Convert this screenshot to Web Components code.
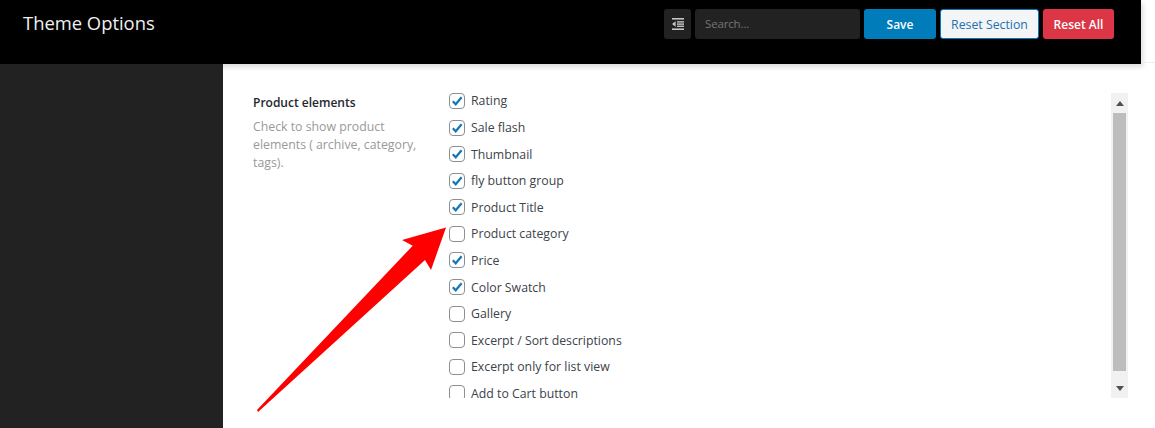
<!DOCTYPE html>
<html>
<head>
<meta charset="utf-8">
<title>Theme Options</title>
<style>
  html, body { margin: 0; height: 100%; overflow: hidden; background: #fff; }
  body { font-family: "Open Sans", "Noto Sans", sans-serif; }
</style>
</head>
<body>
<theme-options></theme-options>

<script>
class OptionsHeader extends HTMLElement {
	constructor() {
		super();
		this.attachShadow({ mode: 'open' });
	}

	connectedCallback() {
		this.shadowRoot.innerHTML = `
      <style>
        :host {
          display: flex;
          justify-content: space-between;
          box-sizing: border-box;
          width: 1141px;
          height: 64px;
          padding: 9px 27px 0 23px;
          background: #000;
          box-shadow: 2px 3px 5px rgba(0,0,0,0.14);
          position: relative;
          z-index: 1;
        }
        :host::after {
          content: '';
          position: absolute;
          left: 100%;
          top: 62px;
          width: 14px;
          height: 1px;
          background: #eee;
        }
        h1 {
          margin: 0;
          color: #f0f0f0;
          font: 400 18.4px/28px "Open Sans", sans-serif;
        }
        .tools {
          display: flex;
          gap: 4px;
          height: 30px;
        }
        .toggle {
          width: 27px;
          background: #222;
          border-radius: 3px;
          display: flex;
          align-items: center;
          justify-content: center;
        }
        .search {
          box-sizing: border-box;
          width: 165px;
          padding-left: 10px;
          background: #222;
          border-radius: 3px;
          color: #757575;
          font-size: 11.5px;
          letter-spacing: -0.15px;
          line-height: 30px;
        }
        button {
          box-sizing: border-box;
          height: 30px;
          padding: 0;
          border: 0;
          border-radius: 3px;
          font: 600 12px "Open Sans", sans-serif;
          color: #fff;
        }
        .save { width: 72px; background: #007cba; }
        .section {
          width: 99px;
          background: #f3f5f6;
          border: 1px solid #007cba;
          color: #2271b1;
          font-weight: 400;
          font-size: 12.3px;
        }
        .all { width: 71px; background: #dc3545; }
      </style>
      <h1>Theme Options</h1>
      <div class="tools">
        <div class="toggle">
          <svg width="12" height="12" viewBox="0 0 12 12" fill="#c4c4c4">
            <rect x="0" y="0" width="12" height="1.6"/>
            <rect x="5" y="3.2" width="7" height="1.4"/>
            <rect x="5" y="5.4" width="7" height="1.4"/>
            <rect x="5" y="7.6" width="7" height="1.4"/>
            <rect x="0" y="10.4" width="12" height="1.6"/>
            <path d="M3.6 3.2v5.6L0 6z"/>
          </svg>
        </div>
        <div class="search">Search...</div>
        <button class="save">Save</button>
        <button class="section">Reset Section</button>
        <button class="all">Reset All</button>
      </div>
    `;
	}
}

class OptionCheck extends HTMLElement {
	constructor() {
		super();
		this.attachShadow({ mode: 'open' });
	}

	connectedCallback() {
		const tick = this.hasAttribute('checked')
			? '<svg width="12" height="12" viewBox="0 0 12 12"><path d="M1.8 6.2 4.7 9.3 10.6 2.2" fill="none" stroke="#1379b4" stroke-width="2.2"/></svg>'
			: '';
		this.shadowRoot.innerHTML = `
      <style>
        :host {
          display: flex;
          align-items: center;
          gap: 6px;
          height: 26.6px;
          color: #3c434a;
          font-size: 12.3px;
          white-space: nowrap;
        }
        .box {
          box-sizing: border-box;
          width: 16px;
          height: 16px;
          flex: none;
          border: 1px solid #8c8f94;
          border-radius: 4px;
          background: #fff;
          display: flex;
          align-items: center;
          justify-content: center;
        }
      </style>
      <span class="box">${tick}</span>
      <slot></slot>
    `;
	}
}

class OptionScrollbar extends HTMLElement {
	constructor() {
		super();
		this.attachShadow({ mode: 'open' });
	}

	connectedCallback() {
		this.shadowRoot.innerHTML = `
      <style>
        :host {
          display: flex;
          flex-direction: column;
          align-items: center;
          width: 17px;
          height: 305px;
          background: #f1f1f1;
        }
        .arrow {
          height: 20px;
          flex: none;
          display: flex;
          align-items: center;
        }
        .track {
          flex: 1;
          padding: 0 2px;
          box-sizing: border-box;
          width: 100%;
        }
        .thumb {
          height: 258px;
          background: #bdbdbd;
        }
      </style>
      <div class="arrow"><svg width="8" height="5" viewBox="0 0 8 5"><path d="M4 0 8 5H0z" fill="#505050"/></svg></div>
      <div class="track"><div class="thumb"></div></div>
      <div class="arrow"><svg width="8" height="5" viewBox="0 0 8 5"><path d="M4 5 8 0H0z" fill="#505050"/></svg></div>
    `;
	}
}

class ProductElements extends HTMLElement {
	constructor() {
		super();
		this.attachShadow({ mode: 'open' });
	}

	connectedCallback() {
		const options = [
			['Rating', true],
			['Sale flash', true],
			['Thumbnail', true],
			['fly button group', true],
			['Product Title', true],
			['Product category', false],
			['Price', true],
			['Color Swatch', true],
			['Gallery', false],
			['Excerpt / Sort descriptions', false],
			['Excerpt only for list view', false],
			['Add to Cart button', false],
		];
		const rows = options
			.map(([label, on]) => `<option-check ${on ? 'checked' : ''}>${label}</option-check>`)
			.join('');
		this.shadowRoot.innerHTML = `
      <style>
        :host {
          display: grid;
          grid-template-columns: 196px 662px 17px;
          align-items: start;
          padding: 29px 0 0 30px;
        }
        h3 {
          margin: 0 0 6px;
          padding-top: 1px;
          color: #23282d;
          font: 600 12px/18px "Open Sans", sans-serif;
        }
        p {
          margin: 0;
          width: 170px;
          color: #999;
          font-size: 12.3px;
          line-height: 18px;
        }
        .list {
          height: 310.4px;
          overflow: hidden;
          margin-top: -5.4px;
        }
      </style>
      <div>
        <h3>Product elements</h3>
        <p>Check to show product elements ( archive, category, tags).</p>
      </div>
      <div class="list">${rows}</div>
      <option-scrollbar></option-scrollbar>
    `;
	}
}

class ThemeOptions extends HTMLElement {
	constructor() {
		super();
		this.attachShadow({ mode: 'open' });
	}

	connectedCallback() {
		this.shadowRoot.innerHTML = `
      <style>
        :host {
          display: block;
          position: relative;
          width: 1155px;
          height: 428px;
          overflow: hidden;
        }
        .body {
          display: grid;
          grid-template-columns: 223px 1fr;
          height: 364px;
        }
        .side { background: #222; position: relative; z-index: 2; }
        .arrow {
          position: absolute;
          left: 0;
          top: 0;
          z-index: 3;
        }
      </style>
      <options-header></options-header>
      <div class="body">
        <div class="side"></div>
        <product-elements></product-elements>
      </div>
      <svg class="arrow" width="1155" height="428" viewBox="0 0 1155 428">
        <path d="M446 227.5 402 240 412.7 245.7 257 410 258 412 425 260 431 270z" fill="#fe0000"/>
      </svg>
    `;
	}
}

customElements.define('options-header', OptionsHeader);
customElements.define('option-check', OptionCheck);
customElements.define('option-scrollbar', OptionScrollbar);
customElements.define('product-elements', ProductElements);
customElements.define('theme-options', ThemeOptions);
</script>
</body>
</html>
